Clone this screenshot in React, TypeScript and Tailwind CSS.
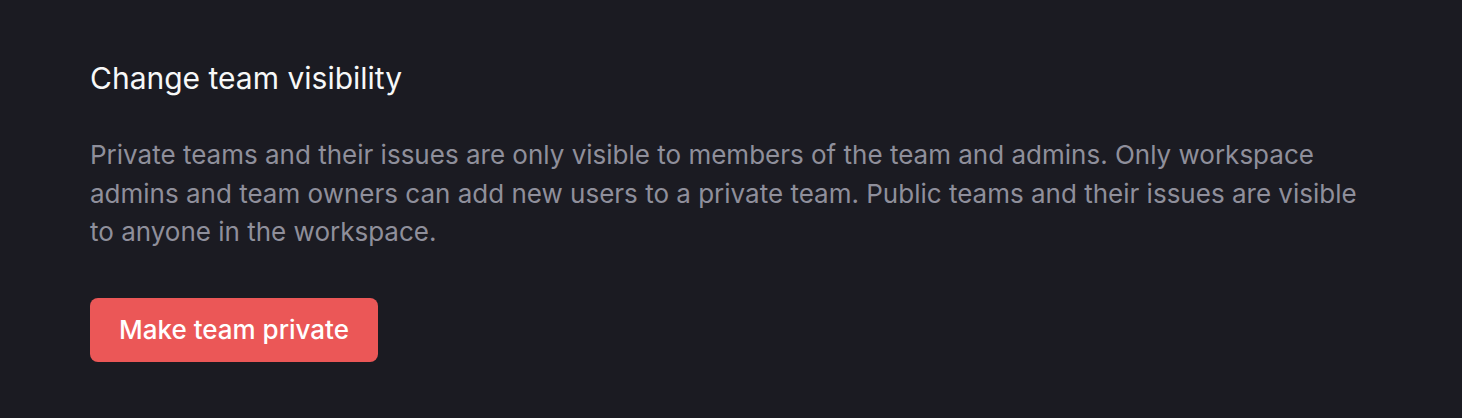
import React from 'react';

const App: React.FC = () => {
    return (
        <div
            className="w-full h-[418px] bg-[#1b1b22] px-[90px] pt-[58px]"
            style={{ fontFamily: 'Inter, "Noto Sans", sans-serif' }}
        >
            <h2 className="text-[30px] leading-[40px] text-[#f7f8f8] font-normal">Change team visibility</h2>
            <p className="mt-[38px] text-[26px] leading-[38.5px] text-[#8f8f9b] max-w-[1282px]">
                Private teams and their issues are only visible to members of the team and admins. Only workspace
                admins and team owners can add new users to a private team. Public teams and their issues are visible
                to anyone in the workspace.
            </p>
            <button className="mt-[46px] h-16 w-[288px] rounded-lg bg-[#eb5757] text-white text-[26px] font-medium flex items-center justify-center">
                Make team private
            </button>
        </div>
    );
};

export default App;
